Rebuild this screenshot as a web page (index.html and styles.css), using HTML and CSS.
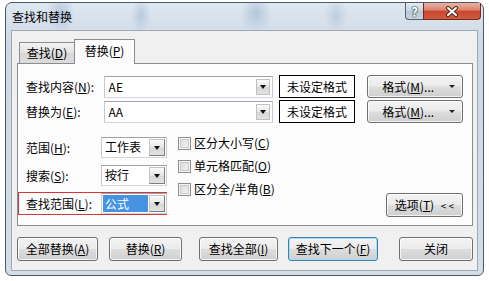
FILE: index.html
```html
<!DOCTYPE html>
<html>
<head>
    <meta charset="UTF-8">
    <title>查找和替换</title>
    <link rel="stylesheet" href="styles.css">
</head>
<body>
    <div class="window">
        <div class="titlebar">
            <span class="title">查找和替换</span>
            <div class="caption-buttons">
                <span class="cap-btn help">?</span>
                <span class="cap-btn close">
                    <svg width="14" height="11" viewBox="0 0 14 11">
                        <path d="M3 2 L11 9 M11 2 L3 9" stroke="#4a2a24" stroke-width="4" stroke-linecap="round"/>
                        <path d="M3 2 L11 9 M11 2 L3 9" stroke="#fff" stroke-width="2" stroke-linecap="round"/>
                    </svg>
                </span>
            </div>
        </div>

        <div class="client">
            <div class="tabs">
                <div class="tab">查找(<u>D</u>)</div>
                <div class="tab active">替换(<u>P</u>)</div>
            </div>

            <div class="panel">
                <div class="text-row">
                    <span class="field-label">查找内容(<u>N</u>):</span>
                    <div class="combo wide"><span class="combo-text">AE</span><span class="drop small"></span></div>
                    <div class="format-preview">未设定格式</div>
                    <button class="btn format-btn">格式(<u>M</u>)... <span class="caret"></span></button>
                </div>
                <div class="text-row">
                    <span class="field-label">替换为(<u>E</u>):</span>
                    <div class="combo wide"><span class="combo-text">AA</span><span class="drop small"></span></div>
                    <div class="format-preview">未设定格式</div>
                    <button class="btn format-btn">格式(<u>M</u>)... <span class="caret"></span></button>
                </div>

                <div class="options">
                    <div class="option-fields">
                        <div class="option-row">
                            <span class="option-label">范围(<u>H</u>):</span>
                            <div class="combo short"><span class="combo-text">工作表</span><span class="drop"></span></div>
                        </div>
                        <div class="option-row">
                            <span class="option-label">搜索(<u>S</u>):</span>
                            <div class="combo short"><span class="combo-text">按行</span><span class="drop"></span></div>
                        </div>
                        <div class="option-row highlight">
                            <span class="option-label">查找范围(<u>L</u>):</span>
                            <div class="combo short"><span class="combo-text"><span class="selected">公式</span></span><span class="drop"></span></div>
                        </div>
                    </div>

                    <div class="checks">
                        <label class="check"><span class="box"></span>区分大小写(<u>C</u>)</label>
                        <label class="check"><span class="box"></span>单元格匹配(<u>O</u>)</label>
                        <label class="check"><span class="box"></span>区分全/半角(<u>B</u>)</label>
                    </div>

                    <button class="btn options-btn">选项(<u>T</u>) <span class="chev">&lt; &lt;</span></button>
                </div>
            </div>

            <div class="actions">
                <button class="btn act-replace-all">全部替换(<u>A</u>)</button>
                <button class="btn act-replace">替换(<u>R</u>)</button>
                <button class="btn act-find-all">查找全部(<u>I</u>)</button>
                <button class="btn default act-find-next">查找下一个(<u>F</u>)</button>
                <button class="btn act-close">关闭</button>
            </div>
        </div>
    </div>
</body>
</html>
```

FILE: styles.css
```css
* {
    box-sizing: border-box;
}

body {
    margin: 0;
    background: #fff;
    font-family: "Noto Sans CJK SC", "Noto Sans", sans-serif;
    font-size: 12px;
    color: #000;
}

u {
    text-decoration: underline;
    text-underline-offset: 1px;
}

/* window frame */
.window {
    margin: 2px 0 0 5px;
    width: 479px;
    border: 1px solid #4b5a6b;
    border-radius: 7px 7px 6px 6px;
    padding: 0 5px 4px;
    background:
        radial-gradient(ellipse 14px 20px at 55px 10px, rgba(110, 145, 190, 0.35), transparent),
        radial-gradient(ellipse 10px 18px at 135px 12px, rgba(110, 145, 190, 0.3), transparent),
        radial-gradient(ellipse 16px 20px at 250px 10px, rgba(110, 145, 190, 0.35), transparent),
        radial-gradient(ellipse 12px 18px at 330px 12px, rgba(110, 145, 190, 0.25), transparent),
        linear-gradient(#dfe7f0, #cdd9e6 40px, #d3dde8);
    display: flex;
    flex-direction: column;
}

.titlebar {
    height: 27px;
    display: flex;
    align-items: flex-start;
}

.title {
    padding: 5px 0 0 1px;
    line-height: 17px;
    color: #000;
}

.caption-buttons {
    margin-left: auto;
    margin-right: -3px;
    display: flex;
}

.cap-btn {
    height: 17px;
    border: 1px solid #55606c;
    border-top: none;
    display: flex;
    align-items: center;
    justify-content: center;
}

.help {
    width: 18px;
    border-radius: 0 0 0 4px;
    border-right: none;
    background: linear-gradient(#e4ebf3, #c6d3e1 50%, #b6c6d7 50%, #c9d6e3);
    color: #fff;
    font-weight: bold;
    font-size: 13px;
    line-height: 15px;
    text-shadow: 0 0 1px #2e3a46, 0 0 1px #2e3a46, 0 0 2px #2e3a46;
}

.close {
    width: 58px;
    border-radius: 0 0 4px 0;
    border-color: #6e2c20;
    background: linear-gradient(#eab3a5, #d9826c 45%, #c9472d 50%, #cf5a3c 100%);
}

/* client area */
.client {
    height: 241px;
    border: 1px solid #9ea9b5;
    background: #f0f0f0;
    padding: 8px 4px 0 5px;
}

.tabs {
    display: flex;
    align-items: flex-end;
    height: 24px;
    padding-left: 2px;
}

.tab {
    height: 21px;
    width: 56px;
    border: 1px solid #898c95;
    border-bottom: none;
    background: linear-gradient(#f2f2f2, #e4e4e4 50%, #d7d7d7 50%, #dcdcdc);
    text-align: center;
    line-height: 20px;
}

.tab.active {
    position: relative;
    z-index: 1;
    height: 25px;
    width: 61px;
    margin-left: -1px;
    margin-bottom: -1px;
    background: #fcfcfc;
    line-height: 22px;
}

.panel {
    border: 1px solid #898c95;
    background: #fcfcfc;
    padding: 11px 9px 8px 8px;
}

.text-row {
    display: flex;
    align-items: center;
    height: 23px;
    margin-bottom: 2px;
}

.field-label {
    width: 78px;
    line-height: 16px;
}

.combo {
    display: flex;
    height: 22px;
    padding: 2px;
    background: #fff;
    border: 1px solid #abadb3;
    border-color: #9fa2a8 #c6cad0 #d2d6dc #c6cad0;
}

.combo.wide {
    width: 170px;
}

.combo.short {
    width: 66px;
    height: 21px;
    padding: 1px;
}

.combo-text {
    flex: 1;
    padding-left: 2px;
    line-height: 16px;
}

.drop {
    width: 16px;
    border: 1px solid #9c9c9c;
    border-color: #c4c4c4 #7d7d7d #7d7d7d #c4c4c4;
    background: linear-gradient(#fbfbfb, #e6e6e6 50%, #d6d6d6 50%, #e2e2e2);
    display: flex;
    align-items: center;
    justify-content: center;
}

.drop.small {
    width: 14px;
    border-color: #c0c0c0;
}

.drop::after {
    content: "";
    border-left: 3.5px solid transparent;
    border-right: 3.5px solid transparent;
    border-top: 4px solid #111;
}

.selected {
    display: block;
    margin-left: -2px;
    margin-right: 1px;
    padding-left: 2px;
    height: 17px;
    background: #4693e2;
    color: #fff;
    line-height: 17px;
}

.format-preview {
    margin-left: 6px;
    width: 77px;
    height: 23px;
    border: 1px solid #000;
    background: #fff;
    text-align: center;
    line-height: 21px;
}

/* buttons */
.btn {
    font: inherit;
    color: #000;
    height: 24px;
    padding: 0;
    border: 1px solid #707070;
    border-radius: 3px;
    background: linear-gradient(#f3f3f3, #ebebeb 48%, #dddddd 52%, #cfcfcf);
    box-shadow: inset 0 0 0 1px rgba(255, 255, 255, 0.75);
    line-height: 20px;
}

.btn.default {
    border-color: #3c7fb1;
    box-shadow: inset 0 0 0 1px #a9dcf5;
}

.format-btn {
    margin-left: 12px;
    width: 96px;
    height: 23px;
    position: relative;
    padding-right: 14px;
}

.caret {
    position: absolute;
    right: 7px;
    top: 9px;
    border-left: 3px solid transparent;
    border-right: 3px solid transparent;
    border-top: 3px solid #222;
}

/* options section */
.options {
    display: flex;
    margin-top: 11px;
}

.option-fields {
    margin-left: -8px;
    padding-top: 2px;
    display: flex;
    flex-direction: column;
    gap: 5px;
}

.option-row {
    display: flex;
    align-items: center;
    height: 23px;
    padding-left: 8px;
}

.option-row.highlight {
    box-shadow: inset 0 0 0 1px #d8373a;
}

.option-label {
    width: 75px;
    line-height: 16px;
}

.checks {
    margin-left: 11px;
    display: flex;
    flex-direction: column;
    gap: 5px;
}

.check {
    display: flex;
    align-items: center;
    height: 18px;
    line-height: 16px;
}

.box {
    width: 13px;
    height: 13px;
    margin-right: 3px;
    border: 1px solid #8e8f8f;
    background: linear-gradient(135deg, #d6d6d6, #f6f6f6);
    box-shadow: inset 0 0 0 1px #f4f4f4, inset 0 0 0 2px #c9cbcf;
}

.options-btn {
    margin-left: auto;
    align-self: flex-end;
    margin-top: 59px;
    width: 77px;
}

.chev {
    font-size: 10px;
    margin-left: 4px;
}

/* bottom buttons */
.actions {
    display: flex;
    margin-top: 11px;
}

.act-replace-all {
    width: 81px;
}

.act-replace {
    width: 73px;
    margin-left: 11px;
}

.act-find-all {
    width: 79px;
    margin-left: 17px;
}

.act-find-next {
    width: 90px;
    margin-left: 10px;
}

.act-close {
    width: 74px;
    margin-left: 21px;
}
```
